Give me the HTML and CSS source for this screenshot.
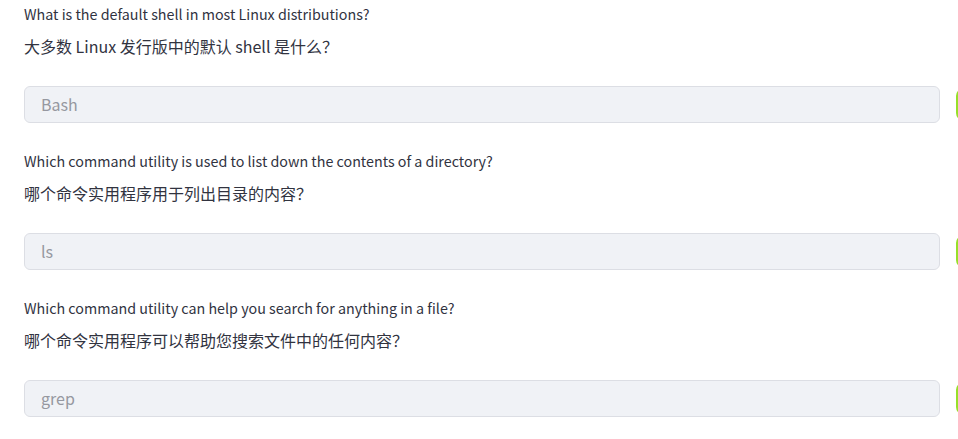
FILE: index.html
```html
<!DOCTYPE html>
<html lang="zh">
<head>
<meta charset="utf-8">
<link rel="stylesheet" href="styles.css">
</head>
<body>
<main class="page">
  <section class="block">
    <p class="q">What is the default shell in most Linux distributions?</p>
    <p class="zh">大多数 Linux 发行版中的默认 shell 是什么？</p>
    <div class="row">
      <div class="input">Bash</div>
      <div class="btn"></div>
    </div>
  </section>
  <section class="block">
    <p class="q">Which command utility is used to list down the contents of a directory?</p>
    <p class="zh">哪个命令实用程序用于列出目录的内容？</p>
    <div class="row">
      <div class="input">ls</div>
      <div class="btn"></div>
    </div>
  </section>
  <section class="block">
    <p class="q">Which command utility can help you search for anything in a file?</p>
    <p class="zh">哪个命令实用程序可以帮助您搜索文件中的任何内容？</p>
    <div class="row">
      <div class="input">grep</div>
      <div class="btn"></div>
    </div>
  </section>
</main>
</body>
</html>
```
FILE: styles.css
```css
html, body {
  margin: 0;
  padding: 0;
  background: #ffffff;
  overflow: hidden;
}
body {
  width: 958px;
  height: 439px;
  font-family: "Noto Sans CJK SC", "Noto Sans", sans-serif;
  color: rgb(49, 51, 63);
}
.page {
  padding-left: 24px;
  display: flex;
  flex-direction: column;
}
.block {
  margin-bottom: 24px;
}
.q {
  margin: 4px 0 0 0;
  font-size: 14.3px;
  line-height: 20px;
}
.zh {
  margin: 10px 0 0 0;
  font-size: 16px;
  line-height: 24px;
}
.row {
  margin-top: 28px;
  display: flex;
  align-items: center;
  width: 934px;
  overflow: hidden;
}
.input {
  box-sizing: border-box;
  width: 916px;
  height: 37px;
  flex: none;
  background: rgb(240, 242, 246);
  border: 1px solid rgb(220, 222, 228);
  border-radius: 6px;
  padding: 0 16px;
  font-size: 16px;
  line-height: 35px;
  color: rgb(150, 152, 160);
}
.btn {
  box-sizing: border-box;
  flex: none;
  margin-left: 16px;
  width: 40px;
  height: 33px;
  border: 2px solid rgb(150, 224, 40);
  border-radius: 8px;
}
```
